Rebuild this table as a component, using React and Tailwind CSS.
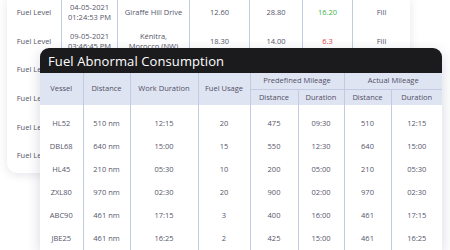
import React from 'react';

const fuelRows = [
  { type: 'Fuel Level', date: '04-05-2021', time: '01:24:53 PM', place: ['Giraffe Hill Drive'], before: '12.60', after: '28.80', diff: '16.20', diffColor: 'text-[#3fb24a]', action: 'Fill' },
  { type: 'Fuel Level', date: '09-05-2021', time: '03:46:45 PM', place: ['Kénitra,', 'Morocco (NW)'], before: '18.30', after: '14.00', diff: '6.3', diffColor: 'text-[#e8383d]', action: 'Fill' },
  { type: 'Fuel Level' },
  { type: 'Fuel Level' },
  { type: 'Fuel Level' },
  { type: 'Fuel Level' },
];

const vessels = [
  ['HL52', '510 nm', '12:15', '20', '475', '09:30', '510', '12:15'],
  ['DBL68', '640 nm', '15:00', '15', '550', '12:30', '640', '15:00'],
  ['HL45', '210 nm', '05:30', '10', '200', '05:00', '210', '05:30'],
  ['ZXL80', '970 nm', '02:30', '20', '900', '02:00', '970', '02:30'],
  ['ABC90', '461 nm', '17:15', '3', '400', '16:00', '461', '17:15'],
  ['JBE25', '461 nm', '16:25', '2', '425', '15:00', '461', '16:25'],
];

const widths = ['w-[43px]', 'w-[47px]', 'w-[68px]', 'w-[52px]', 'w-[48px]', 'w-[46px]', 'w-[47px]', 'w-[51px]'];

const line = 'border-r border-[#c3cbe3]';

const App = () => {
  return (
    <div className="relative w-[450px] h-[250px] overflow-hidden bg-white text-[#55566a]" style={{ fontFamily: '"Open Sans", "Noto Sans", sans-serif' }}>
      {/* back card: fuel log */}
      <div className="ml-[7px] mt-[-2px] w-[403px] bg-white rounded-b-[10px] shadow-[0_2px_10px_rgba(40,50,90,0.12)] pb-[3px]">
        {fuelRows.map((r, i) => (
          <div key={i} className="flex h-[28.6px] text-[7.5px] leading-[10px]">
            <div className={`w-[55px] flex items-center justify-center ${line}`}>{r.type}</div>
            <div className={`w-[56px] flex flex-col items-center justify-center ${line}`}>
              <span>{r.date}</span>
              <span>{r.time}</span>
            </div>
            <div className={`w-[72px] flex flex-col items-center justify-center text-center ${line}`}>
              {r.place && r.place.map((p) => <span key={p}>{p}</span>)}
            </div>
            <div className={`w-[60px] flex items-center justify-center ${line}`}>{r.before}</div>
            <div className={`w-[53px] flex items-center justify-center ${line}`}>{r.after}</div>
            <div className={`w-[50px] flex items-center justify-center ${line} ${r.diffColor || ''}`}>{r.diff}</div>
            <div className="w-[57px] flex items-center justify-center">{r.action}</div>
          </div>
        ))}
      </div>

      {/* front card: abnormal consumption */}
      <div className="absolute left-[40px] top-[48px] w-[402px] bg-white rounded-t-[9px] shadow-[0_4px_14px_rgba(30,40,80,0.18)]">
        <div className="h-[25px] bg-[#1b1b1d] rounded-t-[9px] flex items-center pl-[8px] pt-[2px]">
          <h2 className="text-white text-[13px] tracking-[0.1px]">Fuel Abnormal Consumption</h2>
        </div>
        <table className="table-fixed border-collapse w-full text-[7.5px]">
          <colgroup>
            {widths.map((w, i) => <col key={i} className={w} />)}
          </colgroup>
          <thead className="bg-[#dfe4f2] text-[#4f5066]">
            <tr className="h-[16px]">
              <th rowSpan={2} className={`font-normal ${line}`}>Vessel</th>
              <th rowSpan={2} className={`font-normal ${line}`}>Distance</th>
              <th rowSpan={2} className={`font-normal ${line}`}>Work Duration</th>
              <th rowSpan={2} className={`font-normal ${line}`}>Fuel Usage</th>
              <th colSpan={2} className={`font-normal border-b border-[#c3cbe3] ${line}`}>Predefined Mileage</th>
              <th colSpan={2} className="font-normal border-b border-[#c3cbe3]">Actual Mileage</th>
            </tr>
            <tr className="h-[16px]">
              <th className={`font-normal ${line}`}>Distance</th>
              <th className={`font-normal ${line}`}>Duration</th>
              <th className={`font-normal ${line}`}>Distance</th>
              <th className="font-normal">Duration</th>
            </tr>
          </thead>
          <tbody>
            <tr className="h-[7px]">
              {widths.map((w, i) => <td key={i} className={i < 7 ? line : ''} />)}
            </tr>
            {vessels.map((v) => (
              <tr key={v[0]} className="h-[23px]">
                {v.map((c, i) => (
                  <td key={i} className={`text-center p-0 ${i < 7 ? line : ''}`}>{c}</td>
                ))}
              </tr>
            ))}
          </tbody>
        </table>
      </div>
    </div>
  );
};

export default App;
